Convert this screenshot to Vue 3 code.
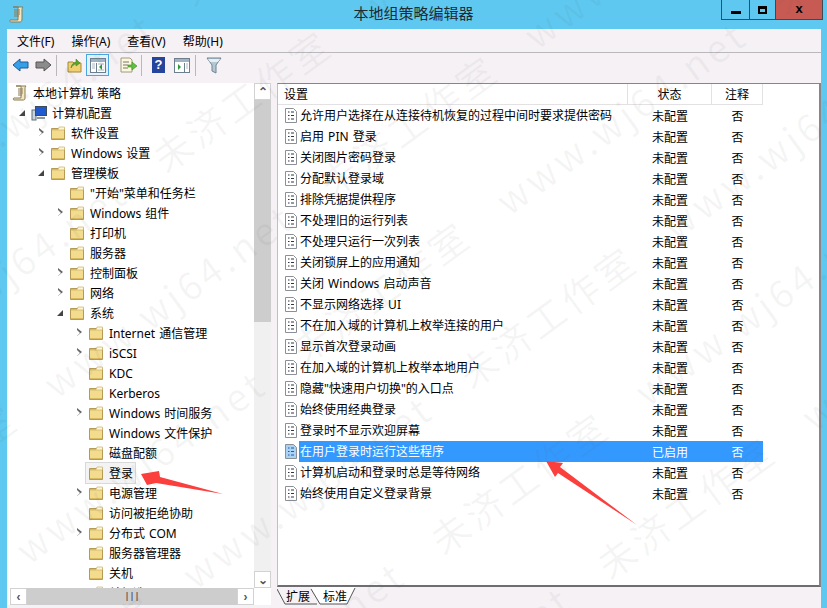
<template>
  <div class="win">
    <header class="titlebar">
      <svg class="app-icon" width="16" height="17" viewBox="0 0 16 17">
        <path d="M4 1h10c-1 1-1 2-1 3v9c0 2-1 3-2 3H2c-1 0-1.500-1-1-2h8V3c0-1 1-2 0-2z" fill="#f3e6c0" stroke="#8a7a55" />
        <path d="M5 4h6M5 6h6M5 8h6M5 10h5" stroke="#8a7a55" />
      </svg>
      <div class="title">本地组策略编辑器</div>
      <div class="caption">
        <button class="cap"><span class="min"></span></button>
        <button class="cap"><span class="max"></span></button>
        <button class="cap close">x</button>
      </div>
    </header>

    <div class="client">
      <nav class="menu">
        <span v-for="m in menus" :key="m">{{ m }}</span>
      </nav>

      <div class="toolbar">
        <svg width="17" height="14" viewBox="0 0 17 14"><path d="M1 7l7-6v3h8v6H8v3z" fill="#35a0e8" stroke="#1b5f9c" /></svg>
        <svg class="tb-next" width="17" height="14" viewBox="0 0 17 14"><path d="M16 7L9 1v3H1v6h8v3z" fill="#8b8b8b" stroke="#555" /></svg>
        <i class="sep"></i>
        <svg class="tb-up" width="16" height="16" viewBox="0 0 16 16">
          <path d="M1 5h5l1 1h7v9H1z" fill="#f0d070" stroke="#a58a3a" />
          <path d="M4 11c0-3 2-5 5-6V2l4 4-4 3V7c-2 0-4 2-5 4z" fill="#5aa52a" stroke="#3c7a18" stroke-width=".5" />
        </svg>
        <span class="tb-active">
          <svg width="16" height="15" viewBox="0 0 16 15">
            <rect x=".5" y=".5" width="15" height="14" fill="#fff" stroke="#6d7f8f" />
            <rect x="1" y="1" width="14" height="3" fill="#9fb3c4" />
            <path d="M6.500 5v9" stroke="#6d7f8f" />
            <path d="M2 6h3M2 8h3M2 10h3M8 6h6M8 12h6" stroke="#a9b6c2" />
            <path d="M12 6v6l-3-3z" fill="#2c9c3a" />
          </svg>
        </span>
        <svg class="tb-export" width="17" height="16" viewBox="0 0 17 16">
          <path d="M1 1h9l2 2v12H1z" fill="#fdf7dc" stroke="#a09a80" />
          <path d="M3 5h6M3 8h5M3 11h5" stroke="#777" />
          <path d="M8 8h4V5l5 4-5 4v-3H8z" fill="#62c040" stroke="#3d8a22" stroke-width=".6" />
        </svg>
        <i class="sep"></i>
        <span class="tb-help">?</span>
        <svg class="tb-show" width="16" height="15" viewBox="0 0 16 15">
          <rect x=".5" y=".5" width="15" height="14" fill="#fff" stroke="#6d7f8f" />
          <rect x="1" y="1" width="14" height="3" fill="#9fb3c4" />
          <path d="M10.500 5v9" stroke="#6d7f8f" />
          <path d="M12 6h2M12 8h2M12 10h2" stroke="#a9b6c2" />
          <path d="M4 6v6l3-3z" fill="#2c9c3a" />
        </svg>
        <i class="sep sep-last"></i>
        <svg width="16" height="17" viewBox="0 0 16 17">
          <path d="M1 1h14l-5 7v8l-4-2V8z" fill="#b4c8d4" stroke="#6f8492" />
          <path d="M2 2h12l-2 3H4z" fill="#e6eef2" />
        </svg>
      </div>

      <div class="panes">
        <section class="tree-pane">
          <div class="tree-body">
            <ul class="tree">
              <li v-for="n in tree" :key="n.label" :style="{ paddingLeft: indent(n) + 'px' }">
                <span v-if="n.level" class="twisty" :class="n.twist"></span>
                <span class="node" :class="{ picked: n.picked }">
                  <svg v-if="n.icon === 'scroll'" class="node-icon" width="16" height="16" viewBox="0 0 16 16">
                    <path d="M4 1h10c-1 1-1 2-1 3v9c0 2-1 2-2 2H2c-1 0-1-2 0-2h7V3c0-1 1-2-1-2z" fill="#f3e6c0" stroke="#8a7a55" />
                    <path d="M6 4h5M6 6h5M6 8h5M6 10h4" stroke="#8a7a55" />
                  </svg>
                  <svg v-else-if="n.icon === 'pc'" class="node-icon" width="16" height="16" viewBox="0 0 16 16">
                    <rect x="1" y="5" width="4" height="10" fill="#c9d3dc" stroke="#5f6e7c" />
                    <rect x="4.500" y="1.500" width="11" height="9" fill="#1e5bd0" stroke="#3c4b5a" />
                    <path d="M6 12h8v2H6z" fill="#8b99a5" />
                  </svg>
                  <svg v-else class="node-icon" width="16" height="16" viewBox="0 0 16 16">
                    <path d="M1.500 3.500h13v11h-13z" fill="#f3dc8e" stroke="#b49a55" />
                    <path d="M2 4.500h6l1-2.500h5.500v3H2z" fill="#fff6d6" stroke="#c9b06a" stroke-width=".7" />
                    <path d="M2 13.500h12" stroke="#d8b960" />
                  </svg>
                  <span class="node-label">{{ n.label }}</span>
                </span>
              </li>
            </ul>
            <div class="vscroll">
              <span class="sb-btn">⌃</span>
              <div class="v-track"><div class="v-thumb"></div></div>
              <span class="sb-btn">⌄</span>
            </div>
          </div>
          <div class="hscroll">
            <span class="sb-btn">‹</span>
            <div class="h-thumb"><b>|||</b></div>
            <span class="sb-btn">›</span>
          </div>
        </section>

        <section class="list-wrap">
          <div class="list-pane">
            <div class="list-head">
              <span class="c-name">设置</span>
              <span class="c-state">状态</span>
              <span class="c-note">注释</span>
            </div>
            <div v-for="r in rows" :key="r.name" class="row" :class="{ active: r.on }">
              <svg class="doc" width="12" height="15" viewBox="0 0 12 15">
                <path d="M.5.500h8l3 3v11H.500z" :fill="r.on ? '#a9d2f5' : '#fff'" stroke="#8b8f96" />
                <path d="M3 4h1.500M3 7.500h1.500M3 11h1.500M6 4h3M6 7.500h3M6 11h3" :stroke="r.on ? '#1c5aa5' : '#2f3640'" stroke-width="1.200" />
              </svg>
              <span class="c-name"><em>{{ r.name }}</em></span>
              <span class="c-state">{{ r.on ? '已启用' : '未配置' }}</span>
              <span class="c-note">否</span>
            </div>
          </div>
          <div class="tabs">
            <svg class="tab-lines" width="90" height="20" viewBox="0 0 90 20">
              <path d="M34 0L43 17H70L78 0z" fill="#fff" />
              <path d="M0 2L8 17H40M34 2L43 17H70L78 1" fill="none" stroke="#555" />
            </svg>
            <span class="tab">扩展</span>
            <span class="tab">标准</span>
          </div>
        </section>
      </div>
    </div>

    <div class="watermark" aria-hidden="true">
      <div v-for="i in 8" :key="i" class="wm-line">{{ mark }}</div>
    </div>

    <svg class="arrows" width="827" height="608" viewBox="0 0 827 608">
      <path d="M141 474L159 471L160 477L223 494L156 483L147 485z" fill="#fb3f3d" />
      <path d="M546 461L563 463L560 467L637 525L558 473L555 477z" fill="#fb3f3d" />
    </svg>
  </div>
</template>

<script setup>
const menus = ['文件(F)', '操作(A)', '查看(V)', '帮助(H)']
const mark = '未济工作室 www.wj64.net 未济工作室 www.wj64.net 未济工作室 www.wj64.net'

const tree = [
  { label: '本地计算机 策略', level: 0, icon: 'scroll' },
  { label: '计算机配置', level: 1, twist: 'open', icon: 'pc' },
  { label: '软件设置', level: 2, twist: 'closed' },
  { label: 'Windows 设置', level: 2, twist: 'closed' },
  { label: '管理模板', level: 2, twist: 'open' },
  { label: '"开始"菜单和任务栏', level: 3 },
  { label: 'Windows 组件', level: 3, twist: 'closed' },
  { label: '打印机', level: 3 },
  { label: '服务器', level: 3 },
  { label: '控制面板', level: 3, twist: 'closed' },
  { label: '网络', level: 3, twist: 'closed' },
  { label: '系统', level: 3, twist: 'open' },
  { label: 'Internet 通信管理', level: 4, twist: 'closed' },
  { label: 'iSCSI', level: 4, twist: 'closed' },
  { label: 'KDC', level: 4 },
  { label: 'Kerberos', level: 4 },
  { label: 'Windows 时间服务', level: 4, twist: 'closed' },
  { label: 'Windows 文件保护', level: 4 },
  { label: '磁盘配额', level: 4 },
  { label: '登录', level: 4, picked: true },
  { label: '电源管理', level: 4, twist: 'closed' },
  { label: '访问被拒绝协助', level: 4 },
  { label: '分布式 COM', level: 4, twist: 'closed' },
  { label: '服务器管理器', level: 4 },
  { label: '关机', level: 4 },
  { label: '关机选项', level: 4 }
]

function indent(n) {
  return n.level ? n.level * 19 - 7 : 4
}

const rows = [
  '允许用户选择在从连接待机恢复的过程中间时要求提供密码',
  '启用 PIN 登录',
  '关闭图片密码登录',
  '分配默认登录域',
  '排除凭据提供程序',
  '不处理旧的运行列表',
  '不处理只运行一次列表',
  '关闭锁屏上的应用通知',
  '关闭 Windows 启动声音',
  '不显示网络选择 UI',
  '不在加入域的计算机上枚举连接的用户',
  '显示首次登录动画',
  '在加入域的计算机上枚举本地用户',
  '隐藏"快速用户切换"的入口点',
  '始终使用经典登录',
  '登录时不显示欢迎屏幕',
  '在用户登录时运行这些程序',
  '计算机启动和登录时总是等待网络',
  '始终使用自定义登录背景'
].map((name, i) => ({ name, on: i === 16 }))
</script>

<style scoped>
.win { position: relative; width: 827px; height: 608px; overflow: hidden; background: #5ec8f0; display: flex; flex-direction: column; font-family: "Noto Sans", "Noto Sans CJK SC", sans-serif; font-size: 12px; word-spacing: 1px; color: #000; }
.titlebar { height: 29px; flex: none; display: flex; align-items: flex-start; position: relative; padding-left: 9px; }
.app-icon { margin-top: 6px; }
.title { position: absolute; left: 0; right: 0; top: 3px; text-align: center; font-size: 15px; line-height: 20px; color: #1c2a33; }
.caption { position: absolute; top: 0; right: 4px; display: flex; border: 1px solid #3b4a55; border-top: 0; height: 20px; box-sizing: border-box; }
.cap { width: 28px; height: 19px; padding: 0; border: 0; border-right: 1px solid #3b4a55; background: #5ec8f0; display: flex; align-items: center; justify-content: center; }
.cap:nth-child(2) { width: 26px; }
.cap .min { width: 10px; height: 3px; background: #000; margin-top: 6px; }
.cap .max { width: 9px; height: 8px; border: 2px solid #000; border-top-width: 3px; box-sizing: border-box; }
.close { width: 46px; border-right: 0; background: #c75a52; font: 700 13px/1 "Liberation Sans", sans-serif; padding-bottom: 3px; }
.client { margin: 0 6px 0 7px; flex: 1; min-height: 0; background: #f5f1f5; display: flex; flex-direction: column; }
.menu { height: 23px; flex: none; display: flex; gap: 17px; padding: 2px 0 0 10px; line-height: 21px; box-sizing: border-box; }
.toolbar { height: 30px; flex: none; box-sizing: border-box; border-top: 1px solid #b9b8bd; display: flex; align-items: center; padding: 0 0 5px 5px; }
.tb-next { margin-left: 6px; }
.sep { width: 1px; height: 21px; background: #b9b8bd; margin: 0 10px 0 4px; }
.tb-up { margin-right: 3px; }
.tb-active { width: 23px; height: 22px; box-sizing: border-box; border: 1px solid #4aa6e0; background: #e2f1fb; display: flex; align-items: center; justify-content: center; margin-right: 11px; }
.tb-help { width: 13px; height: 16px; background: #27449c; color: #fff; font: 700 13px/16px "Liberation Sans", sans-serif; text-align: center; margin-right: 9px; }
.sep-last { margin-left: 5px; }
.panes { flex: 1; min-height: 0; display: flex; padding-top: 1px; }
.tree-pane { width: 263px; margin-left: 1px; flex: none; background: #fff; display: flex; flex-direction: column; height: 522px; overflow: hidden; }
.tree-body { flex: 1; min-height: 0; display: flex; }
.tree { flex: 1; min-width: 0; list-style: none; margin: 0; padding: 0; overflow: hidden; }
.tree li { height: 20px; display: flex; align-items: center; white-space: nowrap; box-sizing: border-box; }
.twisty { width: 11px; height: 10px; flex: none; position: relative; }
.twisty.closed::before { content: ""; position: absolute; left: 0; top: 0; border-left: 5px solid #666; border-top: 4.500px solid transparent; border-bottom: 4.500px solid transparent; }
.twisty.closed::after { content: ""; position: absolute; left: 0; top: 1.500px; border-left: 3.500px solid #fff; border-top: 3px solid transparent; border-bottom: 3px solid transparent; }
.twisty.open::before { content: ""; position: absolute; left: -1px; top: 2px; border-bottom: 6px solid #444; border-left: 6px solid transparent; }
.node { display: flex; align-items: center; height: 20px; }
.node-icon { flex: none; margin-right: 5px; }
.node-label { padding: 0 2px 0 0; }
.picked { background: #f3f3f3; box-shadow: 0 0 0 1px #d9d9d9; padding-left: 2px; margin-left: -2px; }
.vscroll { width: 17px; flex: none; display: flex; flex-direction: column; background: #f0f0f0; }
.sb-btn { width: 17px; height: 17px; flex: none; display: flex; align-items: center; justify-content: center; color: #555; font: 700 12px/1 "Liberation Sans", sans-serif; background: #fff; border: 1px solid #d2d2d2; box-sizing: border-box; }
.v-track { flex: 1; }
.v-thumb { height: 222px; background: #cdcdcd; }
.hscroll { height: 17px; flex: none; display: flex; background: #f0f0f0; margin: 0 17px 0 2px; }
.h-thumb { width: 210px; background: #cdcdcd; text-align: center; line-height: 15px; font-size: 9px; color: #555; }
.list-wrap { margin-left: 6px; width: 544px; flex: none; display: flex; flex-direction: column; }
.list-pane { height: 504px; flex: none; box-sizing: border-box; background: #fff; border: 1px solid #86868b; border-left-color: #c0c0c0; border-bottom: 2px solid #6e6e72; border-right: 2px solid #86868b; }
.list-head { height: 20px; display: flex; align-items: center; border-bottom: 1px solid #e3e1e4; width: 485px; }
.list-head span { line-height: 22px; height: 20px; border-right: 1px solid #e3e1e4; box-sizing: border-box; }
.list-head .c-name { padding-left: 6px; }
.c-name { width: 350px; flex: none; white-space: nowrap; }
.c-state { width: 84px; flex: none; text-align: center; }
.c-note { width: 51px; flex: none; text-align: center; }
.row { height: 21px; display: flex; align-items: center; width: 485px; }
.row .c-name em { font-style: normal; line-height: 21px; }
.doc { flex: none; margin: 0 3px 0 7px; }
.row .c-name { width: 328px; }
.active { background: linear-gradient(to right, transparent 21px, #3399ff 21px); color: #fff; }
.tabs { height: 20px; display: flex; gap: 11px; padding-left: 9px; position: relative; line-height: 20px; }
.tab { position: relative; width: 26px; white-space: nowrap; }
.tab-lines { position: absolute; left: 0; top: 0; }
.watermark { position: absolute; left: -220px; top: -260px; width: 1300px; height: 1200px; transform: rotate(-36deg); pointer-events: none; overflow: hidden; color: rgba(90, 90, 90, 0.06); font: 38px/118px "Noto Sans CJK SC", sans-serif; white-space: nowrap; letter-spacing: 4px; word-spacing: 30px; }
.wm-line { margin-left: -60px; }
.wm-line:nth-child(even) { margin-left: 60px; }
.arrows { position: absolute; left: 0; top: 0; pointer-events: none; }
</style>

<style>
html, body { margin: 0; background: #5ec8f0; }
</style>
